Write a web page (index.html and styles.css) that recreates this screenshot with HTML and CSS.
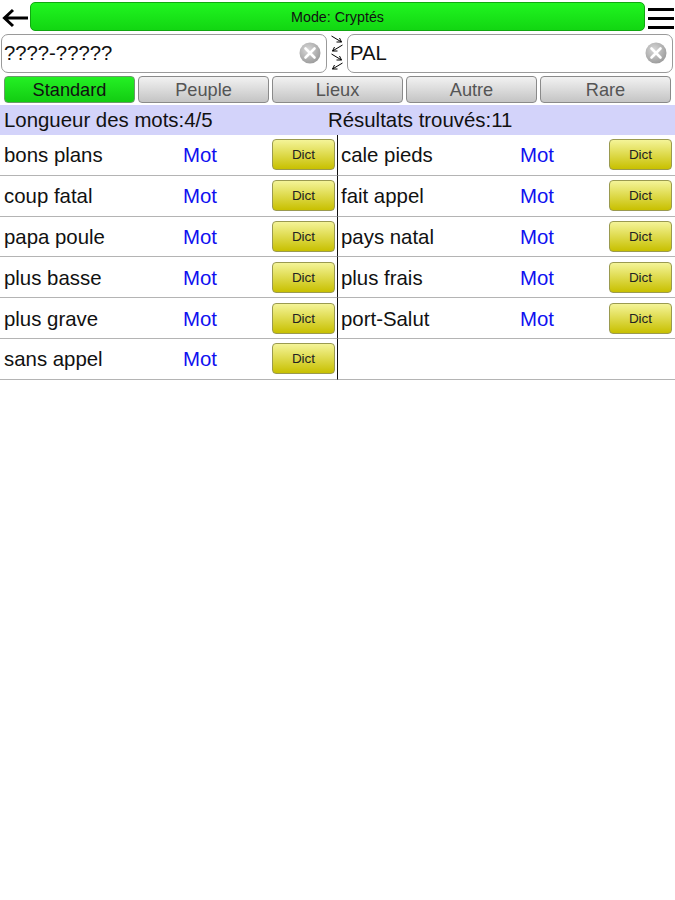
FILE: index.html
```html
<!DOCTYPE html>
<html lang="fr">
<head>
<meta charset="utf-8">
<title>Mode: Cryptés</title>
<link rel="stylesheet" href="styles.css">
</head>
<body>
<div class="topbar">
  <svg class="back" width="28" height="30" viewBox="0 0 28 30"><path d="M27 16H4M12 8L3.5 16L12 24" fill="none" stroke="#000" stroke-width="3"/></svg>
  <div class="mode">Mode: Cryptés</div>
  <svg class="menu" width="28" height="30" viewBox="0 0 28 30"><rect x="1" y="6" width="26" height="3"/><rect x="1" y="15" width="26" height="3"/><rect x="1" y="24" width="26" height="3"/></svg>
</div>
<div class="inputs">
  <div class="field"><span class="val">????-?????</span><span class="clear"><svg width="22" height="22" viewBox="0 0 22 22"><defs><radialGradient id="g1" cx="40%" cy="35%" r="70%"><stop offset="0" stop-color="#d8d8d8"/><stop offset="1" stop-color="#9a9a9a"/></radialGradient></defs><circle cx="11" cy="11" r="10.5" fill="url(#g1)"/><path d="M6.5 6.5L15.5 15.5M15.5 6.5L6.5 15.5" stroke="#fff" stroke-width="2.6" stroke-linecap="round"/></svg></span></div>
  <svg class="swap" width="18" height="40" viewBox="0 0 18 40"><g fill="none" stroke="#000" stroke-width="1"><path d="M3 3L13 9M13 9L8 9M13 9L11 5"/><path d="M14 12L4 18M4 18L9 18M4 18L6 14"/><path d="M3 21L13 27M13 27L8 27M13 27L11 23"/><path d="M14 30L4 36M4 36L9 36M4 36L6 32"/></g></svg>
  <div class="field"><span class="val">PAL</span><span class="clear"><svg width="22" height="22" viewBox="0 0 22 22"><defs><radialGradient id="g2" cx="40%" cy="35%" r="70%"><stop offset="0" stop-color="#d8d8d8"/><stop offset="1" stop-color="#9a9a9a"/></radialGradient></defs><circle cx="11" cy="11" r="10.5" fill="url(#g2)"/><path d="M6.5 6.5L15.5 15.5M15.5 6.5L6.5 15.5" stroke="#fff" stroke-width="2.6" stroke-linecap="round"/></svg></span></div>
</div>
<div class="tabs">
  <div class="tab active">Standard</div>
  <div class="tab">Peuple</div>
  <div class="tab">Lieux</div>
  <div class="tab">Autre</div>
  <div class="tab">Rare</div>
</div>
<div class="info">
  <span>Longueur des mots:4/5</span>
  <span>Résultats trouvés:11</span>
</div>
<div class="results">
  <div class="cell left"><span class="word">bons plans</span><span class="mot">Mot</span><span class="dict">Dict</span></div>
  <div class="cell right"><span class="word">cale pieds</span><span class="mot">Mot</span><span class="dict">Dict</span></div>
  <div class="cell left"><span class="word">coup fatal</span><span class="mot">Mot</span><span class="dict">Dict</span></div>
  <div class="cell right"><span class="word">fait appel</span><span class="mot">Mot</span><span class="dict">Dict</span></div>
  <div class="cell left"><span class="word">papa poule</span><span class="mot">Mot</span><span class="dict">Dict</span></div>
  <div class="cell right"><span class="word">pays natal</span><span class="mot">Mot</span><span class="dict">Dict</span></div>
  <div class="cell left"><span class="word">plus basse</span><span class="mot">Mot</span><span class="dict">Dict</span></div>
  <div class="cell right"><span class="word">plus frais</span><span class="mot">Mot</span><span class="dict">Dict</span></div>
  <div class="cell left"><span class="word">plus grave</span><span class="mot">Mot</span><span class="dict">Dict</span></div>
  <div class="cell right"><span class="word">port-Salut</span><span class="mot">Mot</span><span class="dict">Dict</span></div>
  <div class="cell left"><span class="word">sans appel</span><span class="mot">Mot</span><span class="dict">Dict</span></div>
  <div class="cell right"></div>
</div>
</body>
</html>
```

FILE: styles.css
```css
* { box-sizing: border-box; }
html, body { margin: 0; padding: 0; background: #fff; }
body { font-family: "Liberation Sans", Arial, sans-serif; color: #111; width: 675px; }

.topbar { display: flex; align-items: center; height: 33px; }
.back { flex: 0 0 28px; margin-left: 1px; }
.mode {
  flex: 1; height: 29px; margin: 2px 2px 2px 1px;
  background: linear-gradient(#20f520, #12d612);
  border: 1px solid #10a810; border-radius: 5px;
  display: flex; align-items: center; justify-content: center;
  font-size: 14.3px; color: #111;
}
.menu { flex: 0 0 28px; }

.inputs { display: flex; align-items: center; height: 40px; padding: 0 2px 0 1px; }
.field {
  flex: 1; height: 39px; border: 1px solid #9a9a9a; border-radius: 7px;
  display: flex; align-items: center; justify-content: space-between;
  padding: 0 5px 0 2px; background: #fff;
}
.val { font-size: 20.3px; color: #111; }
.clear { display: flex; }
.swap { flex: 0 0 19px; margin-left: 1px; }

.tabs { display: flex; gap: 3px; padding: 3px 4px 0 4px; height: 30px; }
.tab {
  flex: 1; height: 27px; border: 1px solid #8a8a8a; border-radius: 4px;
  background: linear-gradient(#f2f2f2, #c4c4c4);
  display: flex; align-items: center; justify-content: center;
  font-size: 18.2px; color: #555; padding-top: 2px;
}
.tab.active { background: linear-gradient(#24f024, #12cc12); color: #111; border-color: #6a9a6a; }

.info {
  display: grid; grid-template-columns: 324px 1fr;
  height: 30px; margin-top: 2px; padding-left: 4px;
  background: #d3d3fa; align-items: center; font-size: 20.4px; color: #111;
}

.results { display: grid; grid-template-columns: 338px 1fr; }
.cell {
  height: 40.8px; border-bottom: 1px solid #b4b4b4;
  display: flex; align-items: center;
}
.cell.left { padding-left: 4px; padding-right: 2px; border-right: 1px solid #111; }
.cell.right { padding-left: 3px; padding-right: 3px; }
.word { width: 179px; font-size: 20.4px; color: #111; padding-top: 2px; }
.mot { flex: 1; font-size: 20.4px; color: #1010f0; padding-top: 2px; }
.dict {
  width: 63px; height: 31px; border: 1px solid #9a9a50; border-radius: 4px;
  background: linear-gradient(#f4f498, #c8c000);
  display: flex; align-items: center; justify-content: center;
  font-size: 13.5px; color: #222;
}
```
